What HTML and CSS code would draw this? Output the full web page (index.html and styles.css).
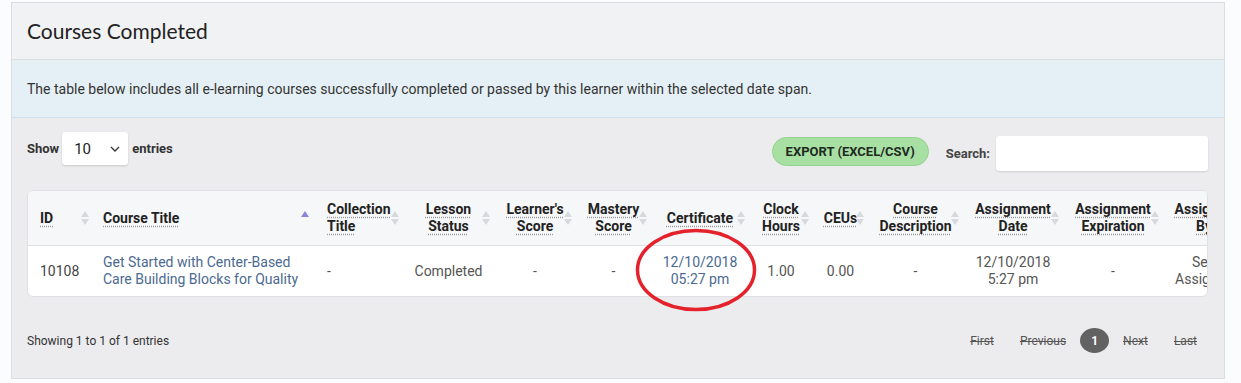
FILE: index.html
```html
<!DOCTYPE html>
<html lang="en">
<head>
    <meta charset="UTF-8">
    <title>Courses Completed</title>
    <link rel="stylesheet" href="styles.css">
</head>
<body>
    <div class="panel">
        <div class="panel-heading">
            <h2>Courses Completed</h2>
        </div>
        <div class="panel-info">
            The table below includes all e-learning courses successfully completed or passed by this learner within the selected date span.
        </div>

        <div class="panel-body">
            <div class="toolbar">
                <label class="length">Show
                    <span class="select">10
                        <svg width="10" height="6" viewBox="0 0 10 6"><path d="M1 1l4 4 4-4" fill="none" stroke="#333" stroke-width="1.3"/></svg>
                    </span>
                    entries</label>
                <div class="toolbar-right">
                    <button class="btn-export">EXPORT (EXCEL/CSV)</button>
                    <label class="search">Search: <input type="text"></label>
                </div>
            </div>

            <div class="table-card">
                <table>
                    <colgroup>
                        <col style="width:65px"><col style="width:224px"><col style="width:86px">
                        <col style="width:91px"><col style="width:82px"><col style="width:75px">
                        <col style="width:98px"><col style="width:64px"><col style="width:55px">
                        <col style="width:95px"><col style="width:100px"><col style="width:100px">
                        <col style="width:82px">
                    </colgroup>
                    <thead>
                        <tr>
                            <th class="first sorting"><span>ID</span></th>
                            <th class="left sorting-asc"><span>Course Title</span></th>
                            <th class="left sorting"><span>Collection Title</span></th>
                            <th class="sorting"><span>Lesson Status</span></th>
                            <th class="sorting"><span>Learner's Score</span></th>
                            <th class="sorting"><span>Mastery Score</span></th>
                            <th class="sorting"><span>Certificate</span></th>
                            <th class="sorting"><span>Clock Hours</span></th>
                            <th class="sorting"><span>CEUs</span></th>
                            <th class="sorting"><span>Course Description</span></th>
                            <th class="sorting"><span>Assignment Date</span></th>
                            <th class="sorting"><span>Assignment Expiration</span></th>
                            <th class="sorting"><span>Assigned By</span></th>
                        </tr>
                    </thead>
                    <tbody>
                        <tr>
                            <td class="first id">10108</td>
                            <td class="left"><a href="#">Get Started with Center-Based Care Building Blocks for Quality</a></td>
                            <td class="left">-</td>
                            <td>Completed</td>
                            <td>-</td>
                            <td>-</td>
                            <td><a href="#">12/10/2018<br>05:27 pm</a></td>
                            <td>1.00</td>
                            <td>0.00</td>
                            <td>-</td>
                            <td>12/10/2018<br>5:27 pm</td>
                            <td>-</td>
                            <td>Self Assigned</td>
                        </tr>
                    </tbody>
                </table>
            </div>

            <div class="table-footer">
                <div class="info">Showing 1 to 1 of 1 entries</div>
                <div class="paging">
                    <a class="disabled">First</a>
                    <a class="disabled">Previous</a>
                    <a class="current">1</a>
                    <a class="disabled">Next</a>
                    <a class="disabled">Last</a>
                </div>
            </div>

            <!-- annotation circle around the certificate -->
            <svg class="highlight" width="124" height="86" viewBox="0 0 124 86">
                <ellipse cx="62" cy="43" rx="58.5" ry="39.5" fill="none" stroke="#e3222c" stroke-width="3.5"/>
            </svg>
        </div>
    </div>
</body>
</html>
```

FILE: styles.css
```css
body {
    margin: 0;
    padding: 2px 16px 0 11px;
    background: #fbfcfe;
    font-family: 'Roboto', 'Liberation Sans', sans-serif;
    color: #333;
}

.panel {
    border: 1px solid #dcdde0;
    background: #ececee;
}

.panel-heading {
    background: #f1f2f3;
    height: 56px;
    padding: 0 15px;
    display: flex;
    align-items: center;
}

.panel-heading h2 {
    margin: 0 0 2px;
    font-family: 'Lato', 'Open Sans', sans-serif;
    font-weight: 400;
    font-size: 21px;
    color: #222;
}

.panel-info {
    background: #e5f0f6;
    border-top: 1px solid #dadfe3;
    border-bottom: 1px solid #cfe0ec;
    height: 57px;
    padding: 0 15px;
    display: flex;
    align-items: center;
    font-size: 14px;
    color: #333;
}

.panel-body {
    position: relative;
    padding: 14px 16px 25px 15px;
}

.toolbar {
    display: flex;
    justify-content: space-between;
    align-items: flex-start;
    height: 58px;
}

.length {
    display: flex;
    align-items: center;
    gap: 3px;
    font-size: 13px;
    font-weight: 700;
    color: #333;
}

.select {
    width: 66px;
    height: 33px;
    margin-right: 1px;
    box-sizing: border-box;
    background: #fff;
    border-radius: 3px;
    box-shadow: 0 1px 2px rgba(0, 0, 0, 0.15);
    padding: 0 8px 0 12px;
    display: flex;
    align-items: center;
    justify-content: space-between;
    font-size: 15px;
    font-weight: 400;
    color: #222;
}

.toolbar-right {
    display: flex;
    align-items: center;
    padding-top: 4px;
}

.btn-export {
    width: 157px;
    height: 29px;
    margin-top: -5px;
    margin-right: 17px;
    background: #a8e0a4;
    border: 1px solid #92d38d;
    border-radius: 15px;
    font-family: inherit;
    font-size: 13px;
    font-weight: 700;
    color: #1f2a1f;
}

.search {
    display: flex;
    align-items: center;
    gap: 6px;
    font-size: 13px;
    font-weight: 700;
    color: #444;
}

.search input {
    width: 212px;
    height: 35px;
    box-sizing: border-box;
    border: none;
    border-radius: 3px;
    background: #fff;
    box-shadow: 0 1px 2px rgba(0, 0, 0, 0.12);
}

.table-card {
    overflow: hidden;
    background: #fff;
    border: 1px solid #dfe0e3;
    border-radius: 6px;
}

table {
    table-layout: fixed;
    width: 1217px;
    border-collapse: collapse;
}

th {
    position: relative;
    height: 54px;
    padding: 0 10px;
    background: #f6f7f9;
    border-bottom: 1px solid #dfe0e3;
    font-size: 14px;
    font-weight: 700;
    line-height: 17px;
    color: #222;
    text-align: center;
    vertical-align: middle;
}

th span {
    text-decoration: underline dotted #999;
    text-underline-offset: 3px;
}

th.first,
td.first {
    text-align: left;
    padding-left: 12px;
}

th.left,
td.left {
    text-align: left;
    padding-left: 10px;
}

th.sorting::before,
th.sorting::after,
th.sorting-asc::before {
    content: "";
    position: absolute;
    right: 4px;
    border-left: 4px solid transparent;
    border-right: 4px solid transparent;
}

th.sorting::before {
    top: 20px;
    border-bottom: 6px solid #d8d9dc;
}

th.sorting::after {
    top: 28px;
    border-top: 6px solid #d8d9dc;
}

th.sorting-asc::before {
    top: 20px;
    right: 8px;
    border-bottom: 6px solid #8985dd;
}

td {
    height: 50px;
    padding: 0 10px;
    font-size: 14px;
    line-height: 17px;
    color: #555;
    text-align: center;
    vertical-align: middle;
}

td.id {
    color: #444;
}

td a {
    color: #4b6a91;
    text-decoration: none;
}

.table-footer {
    display: flex;
    justify-content: space-between;
    align-items: center;
    margin-top: 31px;
}

.info {
    font-size: 12px;
    color: #333;
}

.paging {
    display: flex;
    align-items: center;
    margin-right: -2px;
}

.paging a {
    font-size: 12px;
    color: #555;
    padding: 4px 13px;
}

.paging a.disabled {
    text-decoration: line-through;
}

.paging a.current {
    width: 29px;
    height: 25px;
    padding: 0;
    margin: 0 1px;
    border-radius: 50%;
    background: #626263;
    color: #fff;
    font-weight: 700;
    display: flex;
    align-items: center;
    justify-content: center;
}

.highlight {
    position: absolute;
    left: 622px;
    top: 109px;
}
```
